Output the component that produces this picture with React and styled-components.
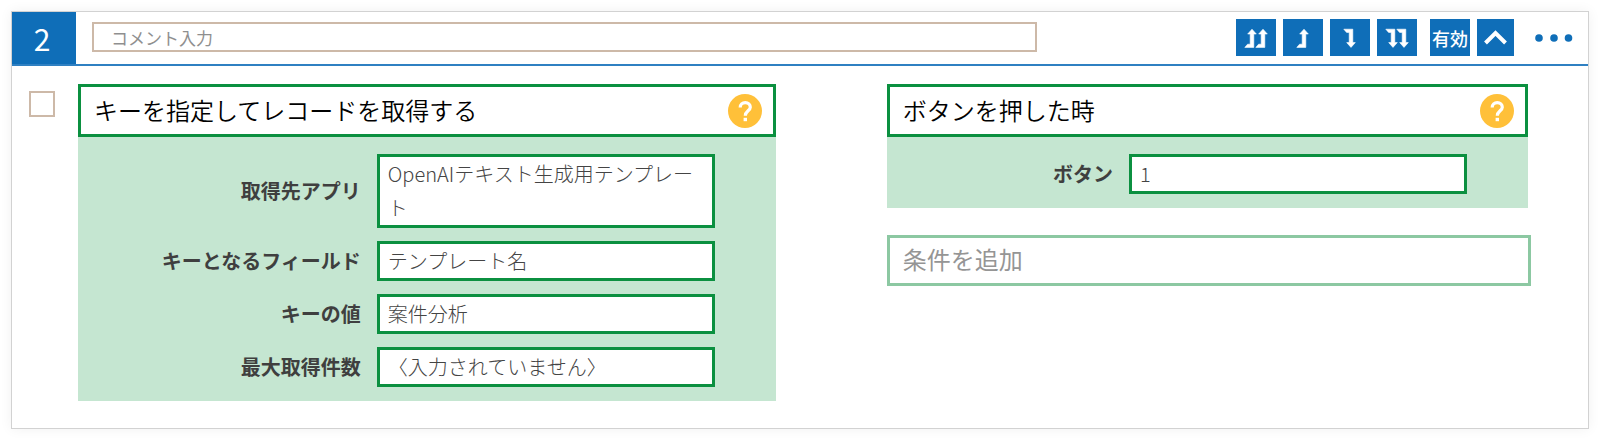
import React from "react";
import styled, { createGlobalStyle } from "styled-components";

const actionFields = [
  { id: "app", label: "取得先アプリ", value: "OpenAIテキスト生成用テンプレート" },
  { id: "key-field", label: "キーとなるフィールド", value: "テンプレート名" },
  { id: "key-value", label: "キーの値", value: "案件分析" },
  { id: "max-count", label: "最大取得件数", value: "〈入力されていません〉" },
];

const conditionFields = [{ id: "button", label: "ボタン", value: "1" }];

const ARROW_UP = "M0 10.2L4.3 15H1.8V28.4H-7.2L-4.4 25.2H-1.8V15H-4.3Z";
const ARROW_DOWN = "M0 28.4L4.3 23.6H1.8V10.2H-7.2L-4.4 13.4H-1.8V23.6H-4.3Z";

function ArrowIcon({ path, double }) {
  const offsets = double ? [16, 27] : [21];
  return (
    <Icon viewBox="0 0 40 37" width="40" height="37" aria-hidden="true">
      {offsets.map((x) => (
        <path
          key={x}
          d={path}
          transform={`translate(${x} 0)`}
          fill="currentColor"
          stroke="currentColor"
          strokeWidth="0.6"
          strokeLinejoin="round"
        />
      ))}
    </Icon>
  );
}

function HelpIcon() {
  return (
    <Icon viewBox="0 0 34 34" width="34" height="34" aria-hidden="true">
      <circle cx="17" cy="17" r="17" fill="#ffc039" />
      <path
        d="M12.2 13.6C12.2 10.6 14.4 8.7 17.3 8.7S22.3 10.6 22.3 13.2C22.3 16.7 17.3 17.1 17.3 21.8"
        fill="none"
        stroke="#fff"
        strokeWidth="3.2"
      />
      <rect x="15.6" y="23.8" width="3.4" height="3.4" fill="#fff" />
    </Icon>
  );
}

function Block({ title, fields }) {
  return (
    <BlockBox>
      <BlockHeader>
        <BlockTitle>{title}</BlockTitle>
        <HelpButton type="button" aria-label="ヘルプ">
          <HelpIcon />
        </HelpButton>
      </BlockHeader>
      <Fields>
        {fields.map((field) => (
          <Field key={field.id}>
            <FieldLabel id={`${field.id}-label`}>{field.label}</FieldLabel>
            <FieldValue type="button" aria-labelledby={`${field.id}-label`}>
              {field.value}
            </FieldValue>
          </Field>
        ))}
      </Fields>
    </BlockBox>
  );
}

function App() {
  return (
    <>
      <GlobalStyle />
      <Card>
        <Header>
          <StepNumber>2</StepNumber>
          <CommentInput type="text" placeholder="コメント入力" aria-label="コメント入力" />
          <Tools>
            <ToolGroup>
              <ToolButton type="button" aria-label="一番上へ移動">
                <ArrowIcon path={ARROW_UP} double />
              </ToolButton>
              <ToolButton type="button" aria-label="上へ移動">
                <ArrowIcon path={ARROW_UP} />
              </ToolButton>
              <ToolButton type="button" aria-label="下へ移動">
                <ArrowIcon path={ARROW_DOWN} />
              </ToolButton>
              <ToolButton type="button" aria-label="一番下へ移動">
                <ArrowIcon path={ARROW_DOWN} double />
              </ToolButton>
            </ToolGroup>
            <ToolGroup>
              <ToolButton type="button">有効</ToolButton>
              <ToolButton type="button" $width={37} aria-label="折りたたむ">
                <Icon viewBox="0 0 37 37" width="37" height="37" aria-hidden="true">
                  <path
                    d="M8.5 24L18.5 14L28.5 24"
                    fill="none"
                    stroke="currentColor"
                    strokeWidth="4"
                  />
                </Icon>
              </ToolButton>
            </ToolGroup>
            <MenuButton type="button" aria-label="メニュー">
              <Icon viewBox="0 0 38 8" width="38" height="8" aria-hidden="true">
                <circle cx="4" cy="4" r="3.8" fill="currentColor" />
                <circle cx="19" cy="4" r="3.8" fill="currentColor" />
                <circle cx="33.5" cy="4" r="3.8" fill="currentColor" />
              </Icon>
            </MenuButton>
          </Tools>
        </Header>
        <Body>
          <Checkbox type="checkbox" aria-label="選択" />
          <Columns>
            <Block title="キーを指定してレコードを取得する" fields={actionFields} />
            <Conditions>
              <ConditionInset>
                <Block title="ボタンを押した時" fields={conditionFields} />
              </ConditionInset>
              <AddCondition type="button">条件を追加</AddCondition>
            </Conditions>
          </Columns>
        </Body>
      </Card>
    </>
  );
}

export default App;

const GlobalStyle = createGlobalStyle`
  * {
    box-sizing: border-box;
  }

  body {
    margin: 0;
    background: #fff;
    font-family: "Noto Sans CJK JP", sans-serif;
    color: #000;
  }

  button,
  input {
    font-family: inherit;
    margin: 0;
  }
`;

const Icon = styled.svg`
  display: block;
  flex: none;
`;

const Card = styled.section`
  margin: 11px;
  border: 1px solid #d2d2d2;
  background: #fff;
  box-shadow: 0 0 12px rgba(0, 0, 0, 0.06);
`;

const Header = styled.header`
  display: flex;
  align-items: stretch;
  border-bottom: 2px solid #2f80c2;
`;

const StepNumber = styled.div`
  width: 64px;
  height: 52px;
  flex: none;
  display: flex;
  align-items: center;
  justify-content: center;
  padding-right: 4px;
  background: #0f6eb8;
  color: #fff;
  font-size: 30px;
  line-height: 40px;
`;

const CommentInput = styled.input`
  flex: 0 1 945px;
  min-width: 0;
  height: 30px;
  align-self: center;
  margin: 0 0 2px 16px;
  padding: 0 17px;
  border: 2px solid #cdb9a8;
  border-radius: 0;
  background: #fff;
  font-size: 17px;

  &::placeholder {
    color: #8f8f8f;
    opacity: 1;
  }
`;

const Tools = styled.div`
  margin-left: auto;
  padding: 0 15px 1px 0;
  display: flex;
  align-items: center;
`;

const ToolGroup = styled.div`
  display: flex;
  gap: 7px;
  margin-right: 13px;
`;

const ToolButton = styled.button`
  width: ${({ $width = 40 }) => $width}px;
  height: 37px;
  display: flex;
  align-items: center;
  justify-content: center;
  padding: 0;
  border: none;
  background: #0f6eb8;
  color: #fff;
  font-size: 18px;
  font-weight: 500;
  white-space: nowrap;
  cursor: pointer;
`;

const MenuButton = styled.button`
  margin-left: 8px;
  padding: 8px 0;
  border: none;
  background: none;
  color: #0f6eb8;
  cursor: pointer;
`;

const Body = styled.div`
  display: flex;
  align-items: flex-start;
  gap: 23px;
  padding: 18px 57px 27px 17px;
`;

const Checkbox = styled.input`
  appearance: none;
  width: 26px;
  height: 26px;
  flex: none;
  margin: 7px 0 0;
  border: 2px solid #cdb9a8;
  background: #fff;
`;

const Columns = styled.div`
  flex: 1;
  display: grid;
  grid-template-columns: minmax(0, 13fr) minmax(0, 12fr);
  align-items: start;
  column-gap: 111px;
`;

const BlockBox = styled.div`
  background: #c5e6d1;
`;

const BlockHeader = styled.div`
  display: flex;
  align-items: center;
  justify-content: space-between;
  height: 53px;
  padding: 0 11px 0 13px;
  border: 3px solid #0b9040;
  background: #fff;
`;

const BlockTitle = styled.div`
  padding-bottom: 2px;
  font-size: 24px;
  line-height: 34px;
  font-weight: 350;
`;

const HelpButton = styled.button`
  padding: 0;
  border: none;
  background: none;
  cursor: pointer;
`;

const Fields = styled.div`
  display: flex;
  flex-direction: column;
  gap: 13px;
  padding: 17px 61px 14px 16px;
`;

const Field = styled.div`
  display: flex;
  align-items: center;
  justify-content: flex-end;
  gap: 16px;
`;

const FieldLabel = styled.div`
  font-size: 20px;
  line-height: 34px;
  font-weight: 700;
  color: #3f3f3f;
`;

const FieldValue = styled.button`
  width: 338px;
  padding: 0 8px;
  border: 3px solid #0b9040;
  background: #fff;
  color: #444;
  font-size: 20px;
  line-height: 34px;
  font-weight: 300;
  text-align: left;
  cursor: pointer;
`;

const Conditions = styled.div`
  display: flex;
  flex-direction: column;
  gap: 27px;
`;

const ConditionInset = styled.div`
  padding-right: 3px;
`;

const AddCondition = styled.button`
  height: 51px;
  padding: 0 13px 3px;
  border: 3px solid #8cc8a2;
  background: #fff;
  color: #959595;
  font-size: 24px;
  line-height: 34px;
  text-align: left;
  cursor: pointer;
`;
